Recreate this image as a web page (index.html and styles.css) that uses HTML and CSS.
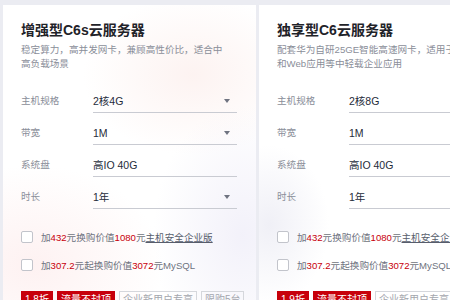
FILE: index.html
```html
<!DOCTYPE html>
<html lang="zh-CN">
<head>
    <meta charset="UTF-8">
    <meta name="viewport" content="width=device-width, initial-scale=1.0">
    <title>云服务器</title>
    <link rel="stylesheet" href="styles.css">
</head>
<body>
    <div class="cards">
        <div class="card card-glow">
            <h2 class="card-title">增强型C6s云服务器</h2>
            <p class="card-desc">稳定算力，高并发网卡，兼顾高性价比，适合中高负载场景</p>

            <div class="spec-list">
                <div class="spec-row">
                    <span class="spec-label">主机规格</span>
                    <div class="spec-select">2核4G<i class="caret"></i></div>
                </div>
                <div class="spec-row">
                    <span class="spec-label">带宽</span>
                    <div class="spec-select">1M<i class="caret"></i></div>
                </div>
                <div class="spec-row">
                    <span class="spec-label">系统盘</span>
                    <div class="spec-select">高IO 40G</div>
                </div>
                <div class="spec-row">
                    <span class="spec-label">时长</span>
                    <div class="spec-select">1年<i class="caret"></i></div>
                </div>
            </div>

            <div class="addons">
                <label class="addon"><span class="check"></span>加<em>432</em>元换购价值<em>1080</em>元<u>主机安全企业版</u></label>
                <label class="addon"><span class="check"></span>加<em>307.2</em>元起换购价值<em>3072</em>元MySQL</label>
            </div>

            <div class="tags">
                <span class="tag tag-red">1.8折</span>
                <span class="tag tag-red">流量不封顶</span>
                <span class="tag">企业新用户专享</span>
                <span class="tag">限购5台</span>
            </div>
        </div>

        <div class="card card-plain">
            <h2 class="card-title">独享型C6云服务器</h2>
            <p class="card-desc">配套华为自研25GE智能高速网卡，适用于高并发和Web应用等中轻载企业应用</p>

            <div class="spec-list">
                <div class="spec-row">
                    <span class="spec-label">主机规格</span>
                    <div class="spec-select">2核8G<i class="caret"></i></div>
                </div>
                <div class="spec-row">
                    <span class="spec-label">带宽</span>
                    <div class="spec-select">1M<i class="caret"></i></div>
                </div>
                <div class="spec-row">
                    <span class="spec-label">系统盘</span>
                    <div class="spec-select">高IO 40G</div>
                </div>
                <div class="spec-row">
                    <span class="spec-label">时长</span>
                    <div class="spec-select">1年<i class="caret"></i></div>
                </div>
            </div>

            <div class="addons">
                <label class="addon"><span class="check"></span>加<em>432</em>元换购价值<em>1080</em>元<u>主机安全企业版</u></label>
                <label class="addon"><span class="check"></span>加<em>307.2</em>元起换购价值<em>3072</em>元MySQL</label>
            </div>

            <div class="tags">
                <span class="tag tag-red">1.9折</span>
                <span class="tag tag-red">流量不封顶</span>
                <span class="tag">企业新用户专享</span>
                <span class="tag">限购5台</span>
            </div>
        </div>
    </div>
</body>
</html>
```

FILE: styles.css
```css
body {
    font-family: "Liberation Sans", "Noto Sans CJK SC", sans-serif;
    background-color: #ebecf2;
    margin: 0;
    padding: 0;
    overflow: hidden;
}

.cards {
    display: flex;
    gap: 3px;
    padding: 5px 0 0 3px;
}

.card {
    flex-shrink: 0;
    width: 253px;
    height: 320px;
    box-sizing: border-box;
    padding: 15px 19px 0 18px;
    background-color: #fff;
}

/* soft pink glow behind the first card */
.card-glow {
    background:
        radial-gradient(ellipse 110px 80px at 190px 70px, rgba(250, 228, 224, 0.45), transparent),
        radial-gradient(ellipse 130px 100px at 30px 260px, rgba(252, 228, 228, 0.5), transparent),
        radial-gradient(ellipse 90px 130px at 240px 230px, rgba(234, 232, 246, 0.6), transparent),
        #fff;
}

.card-plain {
    background:
        radial-gradient(ellipse 60px 80px at 10px 220px, rgba(236, 236, 244, 0.8), transparent),
        #fff;
}

.card-title {
    margin: 0;
    font-size: 14px;
    line-height: 20px;
    font-weight: bold;
    color: #1f2329;
}

.card-desc {
    margin: 3px 0 0;
    max-width: 208px;
    font-size: 9.6px;
    line-height: 14px;
    color: #8a8e99;
}

.spec-list {
    margin-top: 10px;
}

.spec-row {
    display: flex;
    align-items: flex-end;
    height: 32px;
}

.spec-label {
    width: 72px;
    flex-shrink: 0;
    padding-bottom: 4px;
    font-size: 9.6px;
    line-height: 16px;
    color: #8a8e99;
}

.spec-select {
    flex: 1;
    display: flex;
    justify-content: space-between;
    align-items: center;
    padding-bottom: 3px;
    font-size: 10.5px;
    line-height: 16px;
    color: #252b3a;
    border-bottom: 1px solid #c9cbd2;
}

.caret {
    width: 0;
    height: 0;
    margin-right: 7px;
    border-left: 3px solid transparent;
    border-right: 3px solid transparent;
    border-top: 4px solid #6f7380;
}

.addons {
    margin-top: 14px;
}

.addon {
    display: flex;
    align-items: center;
    height: 28px;
    font-size: 9.6px;
    color: #6f7380;
    white-space: nowrap;
}

.addon em {
    font-style: normal;
    color: #c7000b;
}

.addon u {
    color: #575d6c;
}

.check {
    width: 12px;
    height: 12px;
    box-sizing: border-box;
    margin-right: 8px;
    flex-shrink: 0;
    border: 1px solid #c2c4cb;
    border-radius: 2px;
    background-color: #fff;
}

.tags {
    display: flex;
    gap: 4px;
    margin-top: 12px;
    white-space: nowrap;
}

.tag {
    padding: 0 3px;
    font-size: 10px;
    line-height: 16px;
    color: #a3a6ad;
    border: 1px solid #d5d7dc;
}

.tag-red {
    color: #fff;
    background-color: #c7000b;
    border-color: #c7000b;
}
```
